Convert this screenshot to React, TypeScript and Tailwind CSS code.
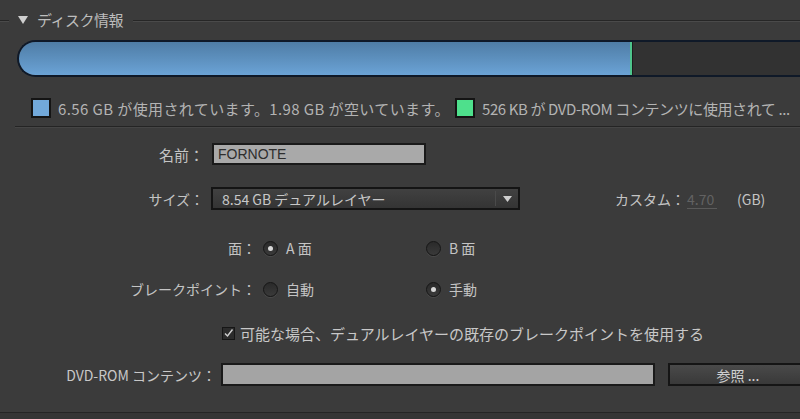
import React from "react";

const font = { fontFamily: '"Noto Sans CJK JP", "Noto Sans", sans-serif' };

function Radio({ checked }: { checked?: boolean }) {
  return (
    <div className="w-[15px] h-[15px] rounded-full border border-[#161616] bg-gradient-to-b from-[#2a2a2a] to-[#3a3a3a] shadow-[0_1px_0_#4a4a4a] flex items-center justify-center shrink-0">
      {checked && <div className="w-[5px] h-[5px] rounded-full bg-[#d8d8d8]" />}
    </div>
  );
}

export default function App() {
  return (
    <div
      className="w-[800px] h-[419px] bg-[#3b3b3b] overflow-hidden flex flex-col text-[#c4c4c4] text-[14px] leading-none"
      style={font}
    >
      {/* header */}
      <div className="h-[40px] flex items-center shrink-0">
        <div className="w-[9px] border-t border-[#262626] border-b border-b-[#4a4a4a] mt-[1px]" />
        <svg width="10" height="8" viewBox="0 0 10 8" className="ml-[9px] mr-[9px]">
          <path d="M0 0 L10 0 L5 8 Z" fill="#cfcfcf" />
        </svg>
        <span className="text-[15px] text-[#bdbdbd] -mt-[1px] tracking-[-0.5px]">ディスク情報</span>
        <div className="flex-1 ml-[10px] border-t border-[#262626] border-b border-b-[#4a4a4a] mt-[1px]" />
      </div>

      {/* bar */}
      <div className="h-[37px] ml-[17px] w-[800px] shrink-0 rounded-l-[19px] border-2 border-[#0f1928] border-r-0 overflow-hidden flex bg-[#333333]">
        <div className="w-[611px] h-full bg-gradient-to-b from-[#4f7da6] to-[#6ba3d6]" />
        <div className="w-[2px] h-full bg-[#4ec48c]" />
        <div className="flex-1 h-full bg-[#323232] border-l border-[#1c1c1c]" />
      </div>

      {/* legend */}
      <div className="mt-[21px] h-[20px] flex items-center pl-[31px] shrink-0 text-[#b3b3b3] whitespace-nowrap text-[15px] tracking-[0.4px]">
        <div className="w-[424px] flex items-center shrink-0">
          <div className="w-[20px] h-[20px] border-2 border-[#141414] bg-[#72a9da] shrink-0" />
          <span className="ml-[7px]">6.56 GB が使用されています。1.98 GB が空いています。</span>
        </div>
        <div className="w-[20px] h-[20px] border-2 border-[#141414] bg-[#4ee08c] shrink-0" />
        <span className="ml-[7px] tracking-[-0.4px]">526 KB が DVD-ROM コンテンツに使用されて ...</span>
      </div>

      {/* separator */}
      <div className="mt-[8px] ml-[15px] border-t border-[#242424] border-b border-b-[#454545] shrink-0" />

      {/* name */}
      <div className="mt-[15px] h-[22px] flex items-center shrink-0">
        <div className="w-[206px] text-right pr-[2px] text-[15px] shrink-0">名前：</div>
        <div
          className="ml-[6px] w-[214px] h-[22px] bg-[#a9a9a9] border-2 border-[#1a1a1a] flex items-center pl-[4px] text-[#2e2e2e] text-[14px] shrink-0"
          style={{ fontFamily: '"Liberation Sans", Arial, sans-serif' }}
        >
          FORNOTE
        </div>
      </div>

      {/* size */}
      <div className="mt-[22px] h-[23px] flex items-center shrink-0">
        <div className="w-[206px] text-right pr-[2px] shrink-0">サイズ：</div>
        <div className="ml-[5px] w-[309px] h-[23px] border-2 border-[#141414] bg-gradient-to-b from-[#414141] to-[#343434] flex items-center shrink-0">
          <span className="flex-1 pl-[9px] text-[#c8c8c8]">8.54 GB デュアルレイヤー</span>
          <div className="w-[1px] h-[15px] bg-[#222] border-r border-[#4a4a4a]" />
          <div className="w-[22px] flex items-center justify-center">
            <svg width="9" height="6" viewBox="0 0 9 6">
              <path d="M0 0 L9 0 L4.5 6 Z" fill="#cfcfcf" />
            </svg>
          </div>
        </div>
        <div className="ml-[95px] text-[#c4c4c4]">カスタム：</div>
        <div className="ml-[2px] text-[#626262] border-b border-[#5a5a5a] pb-[2px] mt-[3px] w-[30px]">4.70</div>
        <div className="ml-[20px] text-[#c4c4c4]">(GB)</div>
      </div>

      {/* face */}
      <div className="mt-[28px] h-[20px] flex items-center shrink-0">
        <div className="w-[256px] text-right shrink-0">面：</div>
        <div className="ml-[7px] w-[163px] flex items-center shrink-0">
          <Radio checked />
          <span className="ml-[8px]">A 面</span>
        </div>
        <Radio />
        <span className="ml-[8px]">B 面</span>
      </div>

      {/* breakpoint */}
      <div className="mt-[21px] h-[20px] flex items-center shrink-0">
        <div className="w-[256px] text-right shrink-0">ブレークポイント：</div>
        <div className="ml-[7px] w-[163px] flex items-center shrink-0">
          <Radio />
          <span className="ml-[8px]">自動</span>
        </div>
        <Radio checked />
        <span className="ml-[8px]">手動</span>
      </div>

      {/* checkbox */}
      <div className="mt-[24px] h-[20px] flex items-center pl-[222px] shrink-0">
        <div className="w-[13px] h-[13px] border border-[#161616] bg-[#2c2c2c] flex items-center justify-center shrink-0">
          <svg width="11" height="11" viewBox="0 0 11 11">
            <path d="M2 5.5 L4.5 8 L9.5 1.5" stroke="#d0d0d0" strokeWidth="1.4" fill="none" />
          </svg>
        </div>
        <span className="ml-[5px] text-[15px] text-[#c8c8c8]">
          可能な場合、デュアルレイヤーの既存のブレークポイントを使用する
        </span>
      </div>

      {/* dvd-rom */}
      <div className="mt-[20px] h-[23px] flex items-center shrink-0">
        <div className="w-[216px] text-right text-[#c8c8c8] shrink-0">DVD-ROM コンテンツ：</div>
        <div className="ml-[5px] w-[434px] h-[23px] bg-[#a4a4a4] border-2 border-[#1a1a1a] shrink-0" />
        <div className="ml-[13px] w-[140px] h-[23px] shrink-0 border-2 border-[#151515] bg-gradient-to-b from-[#4a4a4a] to-[#393939] flex items-center justify-center text-[#d0d0d0]">
          <span>参照 ...</span>
        </div>
      </div>

      {/* bottom */}
      <div className="mt-[26px] border-t border-[#252525] flex-1 bg-[#353535] shrink-0" />
    </div>
  );
}
